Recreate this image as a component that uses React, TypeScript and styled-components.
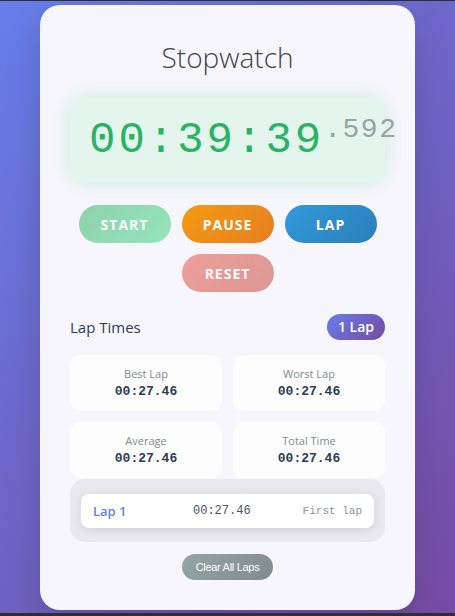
import styled, { createGlobalStyle, css } from "styled-components"

const GlobalStyle = createGlobalStyle`
  html {
    background: #2f2f33;
  }
  body {
    margin: 0;
    font-family: "Open Sans", "Noto Sans", sans-serif;
  }
`

type Variant = "start" | "pause" | "lap" | "reset"

const gradients: Record<Variant, string> = {
  start: "linear-gradient(135deg, #27ae60, #34d67c)",
  pause: "linear-gradient(135deg, #f39c12, #e67e22)",
  lap: "linear-gradient(135deg, #3498db, #2980b9)",
  reset: "linear-gradient(135deg, #e74c3c, #c0392b)",
}

const stats = [
  { label: "Best Lap", value: "00:27.46" },
  { label: "Worst Lap", value: "00:27.46" },
  { label: "Average", value: "00:27.46" },
  { label: "Total Time", value: "00:27.46" },
]

export default function App() {
  return (
    <>
      <GlobalStyle />
      <Page>
        <Card>
          <Title>Stopwatch</Title>
          <Display>
            <Main>00:39:39</Main>
            <Millis>.592</Millis>
          </Display>

          <Controls>
            <ControlButton $variant="start" $faded>Start</ControlButton>
            <ControlButton $variant="pause">Pause</ControlButton>
            <ControlButton $variant="lap">Lap</ControlButton>
            <ControlButton $variant="reset" $faded>Reset</ControlButton>
          </Controls>

          <LapHeader>
            <LapTitle>Lap Times</LapTitle>
            <Badge>1 Lap</Badge>
          </LapHeader>

          <StatsGrid>
            {stats.map((s) => (
              <StatCard key={s.label}>
                <StatLabel>{s.label}</StatLabel>
                <StatValue>{s.value}</StatValue>
              </StatCard>
            ))}
          </StatsGrid>

          <LapList>
            <LapRow>
              <LapName>Lap 1</LapName>
              <LapTime>00:27.46</LapTime>
              <LapNote>First lap</LapNote>
            </LapRow>
          </LapList>

          <ClearRow>
            <ClearButton>Clear All Laps</ClearButton>
          </ClearRow>
        </Card>
      </Page>
    </>
  )
}

const Page = styled.div`
  margin-top: 1px;
  height: 612px;
  padding-top: 4px;
  box-sizing: border-box;
  background: linear-gradient(135deg, #667eea 0%, #764ba2 100%);
`

const Card = styled.div`
  width: 375px;
  margin: 0 auto;
  box-sizing: border-box;
  padding: 30px;
  background: #f7f6fc;
  border-radius: 20px;
  box-shadow: 0 15px 35px rgba(0, 0, 0, 0.15);
`

const Title = styled.h1`
  margin: 0 0 19px;
  text-align: center;
  font-size: 28px;
  font-weight: 300;
  color: #44444c;
  line-height: 44px;
`

const Display = styled.div`
  height: 84px;
  box-sizing: border-box;
  padding: 15px 19px;
  border-radius: 15px;
  background: #e3f5ec;
  box-shadow: 0 0 20px rgba(46, 204, 113, 0.22);
  white-space: nowrap;
  font-family: "Liberation Mono", "Courier New", monospace;
  color: #2bb365;
`

const Main = styled.span`
  font-size: 44px;
  letter-spacing: 3px;
  line-height: 54px;
`

const Millis = styled.span`
  font-size: 28px;
  letter-spacing: 1.5px;
  vertical-align: 15px;
  line-height: 1;
  color: #98a4a5;
`

const Controls = styled.div`
  display: flex;
  flex-wrap: wrap;
  justify-content: center;
  gap: 11px;
  margin: 23px 0 22px;
`

const ControlButton = styled.button<{ $variant: Variant; $faded?: boolean }>`
  width: 92px;
  height: 38px;
  border: none;
  border-radius: 19px;
  background: ${(p) => gradients[p.$variant]};
  color: #fff;
  font-family: "Open Sans", "Noto Sans", sans-serif;
  font-size: 14px;
  font-weight: 700;
  letter-spacing: 1px;
  text-transform: uppercase;
  cursor: pointer;
  ${(p) =>
    p.$faded &&
    css`
      opacity: 0.5;
    `}
`

const LapHeader = styled.div`
  display: flex;
  align-items: center;
  justify-content: space-between;
  margin-bottom: 15px;
`

const LapTitle = styled.h3`
  margin: 0;
  font-size: 15px;
  font-weight: 400;
  color: #2c3e50;
`

const Badge = styled.span`
  height: 26px;
  line-height: 26px;
  padding: 0 11px;
  border-radius: 13px;
  background: linear-gradient(135deg, #667eea, #764ba2);
  color: #fff;
  font-size: 14px;
  font-weight: 600;
`

const StatsGrid = styled.div`
  display: grid;
  grid-template-columns: 1fr 1fr;
  gap: 11px;
  margin-bottom: 1px;
`

const StatCard = styled.div`
  padding: 11px 8px;
  background: #fdfdfe;
  border-radius: 10px;
  text-align: center;
`

const StatLabel = styled.div`
  font-size: 11px;
  line-height: 16px;
  color: #7f8c8d;
  margin-bottom: 2px;
`

const StatValue = styled.div`
  font-family: "Liberation Mono", "Courier New", monospace;
  font-size: 13px;
  font-weight: 700;
  line-height: 16px;
  color: #2c3e50;
`

const LapList = styled.div`
  padding: 15px 11px 14px;
  background: #e9e8ee;
  border-radius: 15px;
`

const LapRow = styled.div`
  display: flex;
  align-items: center;
  justify-content: space-between;
  height: 34px;
  padding: 0 12px;
  background: #fff;
  border-radius: 8px;
  box-shadow: 0 2px 8px rgba(0, 0, 0, 0.1);
`

const LapName = styled.span`
  min-width: 48px;
  font-size: 13px;
  font-weight: 600;
  color: #667eea;
`

const LapTime = styled.span`
  font-family: "Liberation Mono", "Courier New", monospace;
  font-size: 12px;
  color: #4a5566;
`

const LapNote = styled.span`
  font-family: "Liberation Mono", "Courier New", monospace;
  font-size: 11px;
  color: #8a9596;
`

const ClearRow = styled.div`
  display: flex;
  justify-content: center;
  margin-top: 12px;
`

const ClearButton = styled.button`
  width: 91px;
  height: 26px;
  border: none;
  border-radius: 13px;
  background: linear-gradient(135deg, #95a5a6, #7f8c8d);
  color: #fff;
  font-family: "Liberation Sans", Arial, sans-serif;
  font-size: 11px;
  letter-spacing: -0.3px;
  cursor: pointer;
`
